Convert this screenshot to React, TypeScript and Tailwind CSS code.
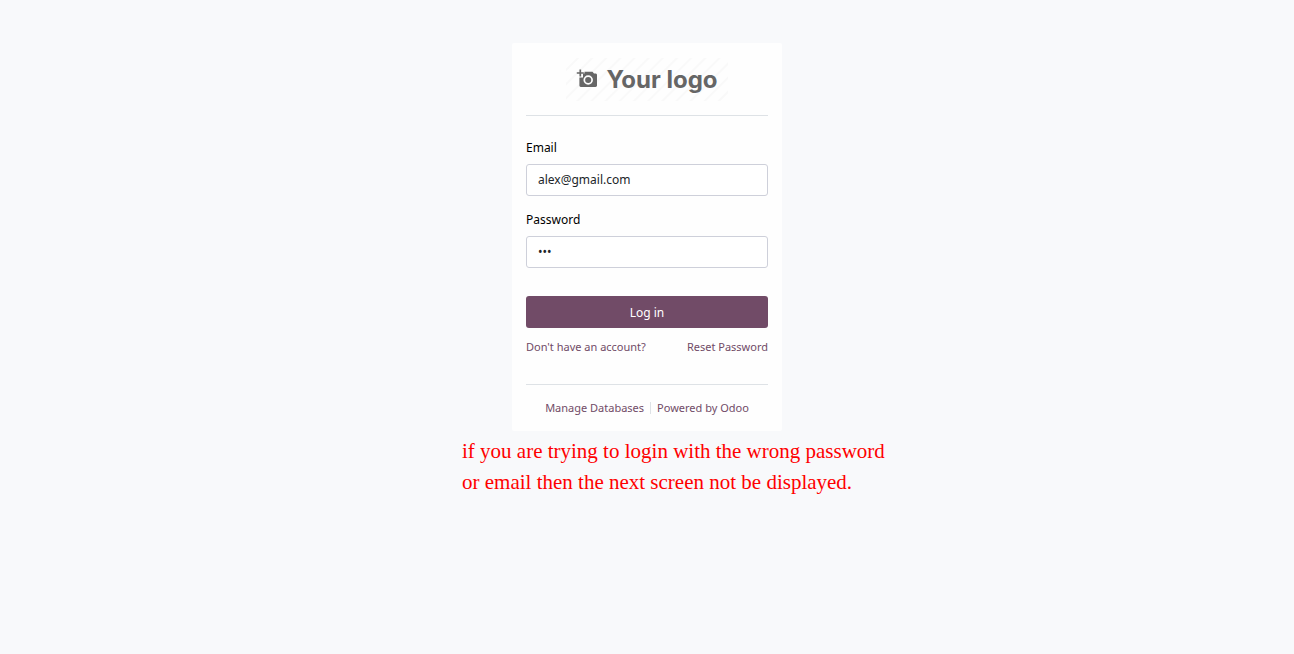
function Logo() {
  return (
    <div className="flex h-[43px] w-[162px] items-center justify-center gap-2 bg-[repeating-linear-gradient(135deg,#fefefe_0px,#fefefe_7px,#f9f9f9_8px,#f9f9f9_9px,#fefefe_10px)] text-[#666666]">
      <svg className="-mt-[2px] h-5 w-[22px]" viewBox="0 0 22 20" fill="none" aria-hidden="true">
        <path
          d="M8.500 2.800h8l1.500 1.700H19.500c.8 0 1.500.6 1.500 1.400v10.700c0 .8-.6 1.400-1.500 1.400H4.800c-.8 0-1.400-.6-1.400-1.400V8.500H7V4.500H8.500z"
          fill="currentColor"
        />
        <path d="M4.300 .5v7M.8 4h7" stroke="currentColor" strokeWidth="1.700" />
        <circle cx="12.200" cy="11" r="3.900" stroke="#fefefe" strokeWidth="1.700" />
      </svg>
      <span className="font-[Inter,Lato,sans-serif] text-2xl leading-8 font-bold">Your logo</span>
    </div>
  );
}

type FieldProps = { id: string; label: string; type: string; value: string };

function Field({ id, label, type, value }: FieldProps) {
  return (
    <div className="flex flex-col gap-2">
      <label htmlFor={id} className="text-xs leading-4 text-black">
        {label}
      </label>
      <input
        id={id}
        type={type}
        defaultValue={value}
        className="h-8 w-full rounded-[3px] border border-[#ced0da] bg-white px-[11px] pb-[2px] text-xs text-[#212529] outline-none"
      />
    </div>
  );
}

export default function App() {
  return (
    <div className="flex min-h-screen flex-col items-center bg-[#f8f9fb] pt-[43px] font-['Noto_Sans',sans-serif]">
      <main className="w-full max-w-[270px] rounded-[2px] bg-[#fefefe] px-[14px] pt-[15px] pb-[15px]">
        <header className="flex justify-center border-b border-[#dee2e6] pb-[14px]">
          <Logo />
        </header>
        <form className="pt-6" onSubmit={(e) => e.preventDefault()}>
          <div className="flex flex-col gap-4">
            <Field id="email" label="Email" type="text" value="alex@gmail.com" />
            <Field id="password" label="Password" type="password" value="123" />
          </div>
          <button
            type="submit"
            className="mt-7 h-8 w-full rounded-[3px] bg-[#714b67] pt-[2px] text-xs text-white"
          >
            Log in
          </button>
          <div className="flex justify-between pt-[11px] text-[11px] leading-4 whitespace-nowrap text-[#714b67]">
            <a href="#signup">Don't have an account?</a>
            <a href="#reset">Reset Password</a>
          </div>
        </form>
        <footer className="mt-[29px] flex justify-center border-t border-[#dee2e6] pt-[15px] text-[11px] leading-4 whitespace-nowrap text-[#714b67]">
          <a href="#databases" className="flex items-center pr-[6px]">
            Manage Databases
          </a>
          <span className="my-[2px] border-l border-[#dee2e6]" />
          <a href="#odoo" className="pl-[6px]">
            Powered by Odoo
          </a>
        </footer>
      </main>
      <p className="pt-[5px] pl-[62px] font-['Liberation_Serif',serif] text-[21px] leading-[31px] text-[#ff0000]">
        <span className="block w-[432px]">
          if you are trying to login with the wrong password or email then the next screen not be displayed.
        </span>
      </p>
    </div>
  );
}
